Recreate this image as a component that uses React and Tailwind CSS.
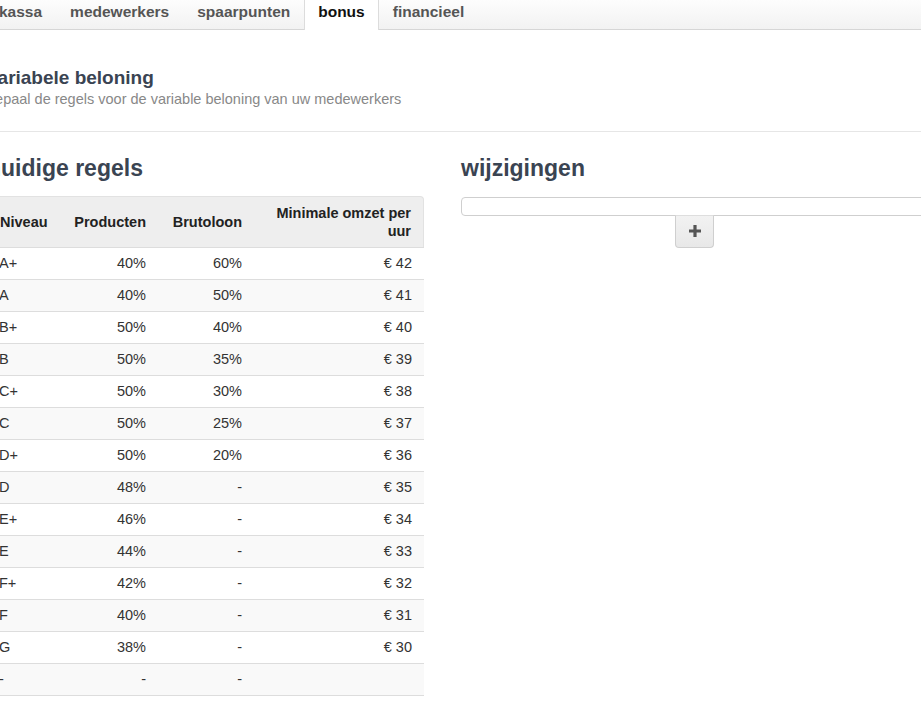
import React from 'react';

const tabs = ['kassa', 'medewerkers', 'spaarpunten', 'bonus', 'financieel'];

const regels = [
    { niveau: 'A+', producten: '40%', brutoloon: '60%', omzet: '€ 42' },
    { niveau: 'A', producten: '40%', brutoloon: '50%', omzet: '€ 41' },
    { niveau: 'B+', producten: '50%', brutoloon: '40%', omzet: '€ 40' },
    { niveau: 'B', producten: '50%', brutoloon: '35%', omzet: '€ 39' },
    { niveau: 'C+', producten: '50%', brutoloon: '30%', omzet: '€ 38' },
    { niveau: 'C', producten: '50%', brutoloon: '25%', omzet: '€ 37' },
    { niveau: 'D+', producten: '50%', brutoloon: '20%', omzet: '€ 36' },
    { niveau: 'D', producten: '48%', brutoloon: '-', omzet: '€ 35' },
    { niveau: 'E+', producten: '46%', brutoloon: '-', omzet: '€ 34' },
    { niveau: 'E', producten: '44%', brutoloon: '-', omzet: '€ 33' },
    { niveau: 'F+', producten: '42%', brutoloon: '-', omzet: '€ 32' },
    { niveau: 'F', producten: '40%', brutoloon: '-', omzet: '€ 31' },
    { niveau: 'G', producten: '38%', brutoloon: '-', omzet: '€ 30' },
    { niveau: '-', producten: '-', brutoloon: '-', omzet: '' },
];

const Tabs = ({ active }) => (
    <div className="h-[30px] w-full bg-gradient-to-b from-[#fdfdfd] to-[#f2f2f2] border-b border-[#d6d6d6]">
        <div className="flex -ml-[15px] h-[30px]">
            {tabs.map((tab) => (
                <div
                    key={tab}
                    className={
                        tab === active
                            ? 'px-[13px] pt-[2px] h-[30px] bg-white border-x border-[#dcdcdc] text-[#111] text-[15.5px] leading-[20px] font-bold'
                            : 'px-[13px] pt-[2px] h-[29px] border-x border-transparent text-[#555] text-[15.5px] leading-[20px] font-bold'
                    }
                >
                    {tab}
                </div>
            ))}
        </div>
    </div>
);

// cell styles: striped rows, light separators, last row closes the table
const cellBase = 'border-t border-[#dddddd] px-3 py-[6px] leading-[19px]';
const stripe = (i) => (i % 2 === 1 ? 'bg-[#f9f9f9]' : 'bg-white');
const closing = (i) => (i === regels.length - 1 ? 'border-b' : '');

const RegelsTable = () => (
    <table className="w-[437px] table-fixed border-separate border-spacing-0 text-[14.5px] text-[#333]">
        <colgroup>
            <col className="w-[74px]" />
            <col className="w-[97px]" />
            <col className="w-[96px]" />
            <col className="w-[170px]" />
        </colgroup>
        <thead>
            <tr>
                <th className="bg-[#eeeeee] border-t border-l border-[#e2e2e2] rounded-tl-[4px] px-3 py-[7px] leading-[18px] text-left font-bold text-[#222] align-middle">Niveau</th>
                <th className="bg-[#eeeeee] border-t border-[#e2e2e2] px-3 py-[7px] leading-[18px] text-right font-bold text-[#222] align-middle">Producten</th>
                <th className="bg-[#eeeeee] border-t border-[#e2e2e2] px-3 py-[7px] leading-[18px] text-right font-bold text-[#222] align-middle">Brutoloon</th>
                <th className="bg-[#eeeeee] border-t border-r border-[#e2e2e2] rounded-tr-[4px] px-3 py-[7px] leading-[18px] text-right font-bold text-[#222] align-middle">Minimale omzet per uur</th>
            </tr>
        </thead>
        <tbody>
            {regels.map((r, i) => (
                <tr key={i}>
                    <td className={[cellBase, stripe(i), closing(i), 'text-left'].join(' ')}>{r.niveau}</td>
                    <td className={[cellBase, stripe(i), closing(i), 'text-right'].join(' ')}>{r.producten}</td>
                    <td className={[cellBase, stripe(i), closing(i), 'text-right'].join(' ')}>{r.brutoloon}</td>
                    <td className={[cellBase, stripe(i), closing(i), 'text-right'].join(' ')}>{r.omzet}</td>
                </tr>
            ))}
        </tbody>
    </table>
);

const Wijzigingen = () => (
    <div className="flex flex-col">
        <h2 className="text-[23px] leading-[28px] font-bold text-[#3a4452]">wijzigingen</h2>
        <div className="mt-[14.5px] h-[19px] w-full rounded-[4px] border border-[#cfcfcf] bg-white" />
        <div className="flex justify-center -mt-px">
            <button className="w-[39px] h-[33px] flex items-center justify-center bg-gradient-to-b from-[#f2f2f2] to-[#e8e8e8] border border-[#cfcfcf] border-t-[#dedede] rounded-b-[4px]">
                <svg width="14" height="14" viewBox="0 0 14 14">
                    <path d="M7 1v12M1 7h12" stroke="#555" strokeWidth="3.2" />
                </svg>
            </button>
        </div>
    </div>
);

const App = () => {
    return (
        <div className="w-full min-h-screen bg-white overflow-hidden font-['Liberation_Sans',Arial,sans-serif]">
            <Tabs active="bonus" />

            <div className="-ml-[13px] w-[941px]">
                {/* Page header */}
                <div className="pt-[36.5px]">
                    <h1 className="text-[19px] leading-[22px] font-bold text-[#3a4452]">variabele beloning</h1>
                    <p className="text-[14.5px] leading-[20px] text-[#888]">bepaal de regels voor de variable beloning van uw medewerkers</p>
                </div>
            </div>

            <hr className="mt-[22.5px] border-0 border-t border-[#e6e6e6]" />

            <div className="-ml-[13px] w-[941px] grid grid-cols-[437px_467px] gap-x-[37px] pt-[22px]">
                <div className="flex flex-col">
                    <h2 className="text-[23px] leading-[28px] font-bold text-[#3a4452]">huidige regels</h2>
                    <div className="mt-[13.5px]">
                        <RegelsTable />
                    </div>
                </div>
                <Wijzigingen />
            </div>
        </div>
    );
};

export default App;
